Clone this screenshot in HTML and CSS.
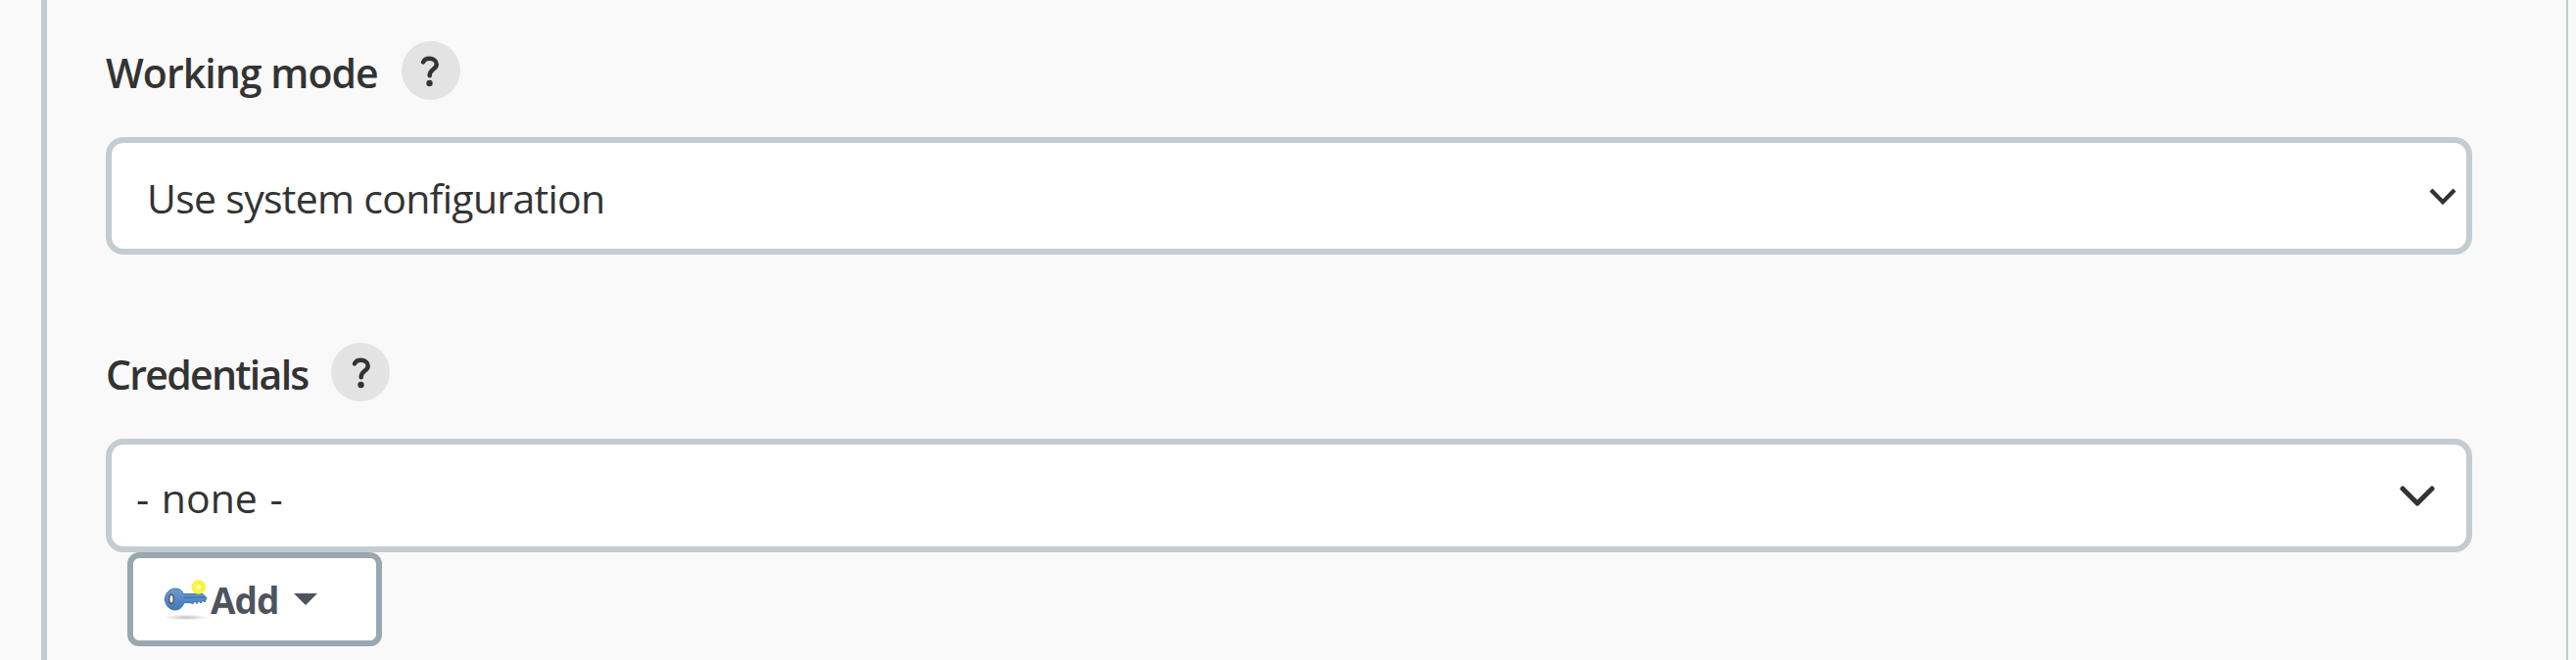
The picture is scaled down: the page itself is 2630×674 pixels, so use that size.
FILE: index.html
```
<!DOCTYPE html>
<html lang="en">
<head>
    <meta charset="UTF-8">
    <title>Configuration</title>
    <link rel="stylesheet" href="styles.css">
</head>
<body>
    <div class="section">
        <div class="form-group">
            <div class="form-label">
                <span class="label-text label-mode">Working mode</span>
                <a class="help-button" title="Help for feature: Working mode">
                    <svg viewBox="0 0 60 60"><path d="M22 21.5C23 19 25.5 17.8 28.3 17.8C32.5 17.8 35.7 20.3 35.7 23.7C35.7 29 28.7 28.3 28.7 35.3"/><circle cx="28.5" cy="43" r="3.2"/></svg>
                </a>
            </div>
            <div class="select select-mode" role="combobox" tabindex="0">
                <span class="select-value">Use system configuration</span>
                <svg class="chevron" viewBox="0 0 28 18"><path d="M2 2L14 14.3L26 2"/></svg>
            </div>
        </div>
        <div class="form-group">
            <div class="form-label">
                <span class="label-text label-credentials">Credentials</span>
                <a class="help-button" title="Help for feature: Credentials">
                    <svg viewBox="0 0 60 60"><path d="M24 21.5C25 19 27.5 17.8 30.3 17.8C34.5 17.8 37.7 20.3 37.7 23.7C37.7 29 30.7 28.3 30.7 35.3"/><circle cx="30.5" cy="43" r="3.2"/></svg>
                </a>
            </div>
            <div class="select select-credentials" role="combobox" tabindex="0">
                <span class="select-value">- none -</span>
                <svg class="chevron" viewBox="0 0 36 22"><path d="M3 3L18 18L33 3"/></svg>
            </div>
            <button class="add-button" type="button">
                <svg class="key-icon" viewBox="0 0 48 48">
                    <defs>
                        <linearGradient id="key-fill" x1="0" y1="0" x2="0" y2="1">
                            <stop offset="0" stop-color="#6b9bd3"/>
                            <stop offset="1" stop-color="#4377b8"/>
                        </linearGradient>
                        <radialGradient id="key-shadow">
                            <stop offset="0" stop-color="#888" stop-opacity=".5"/>
                            <stop offset="1" stop-color="#888" stop-opacity="0"/>
                        </radialGradient>
                    </defs>
                    <ellipse cx="24" cy="42.5" rx="23" ry="3" fill="url(#key-shadow)"/>
                    <path d="M13 13C17 13 20 15 21.500 18.500H41L45 22.500L43 27L41 25L39 28L37 25.500L35 28.500L33 26L31 28.500L28 27.500H22C20.500 32 17 35 13 35C7 35 2.500 30 2.500 24C2.500 18 7 13 13 13Z" fill="url(#key-fill)" stroke="#4674b2" stroke-width="1"/>
                    <path d="M21 22H43" stroke="#3967a5" stroke-width="1"/>
                    <ellipse cx="9" cy="23.800" rx="2.300" ry="4.500" fill="#f4f4ef" stroke="#535c60" stroke-width="1.500"/>
                    <circle cx="36.800" cy="11.500" r="4.800" fill="#fffde0" stroke="#fff33c" stroke-width="5"/>
                </svg>
                <span class="add-text">Add</span>
                <svg class="caret" viewBox="0 0 24 12"><path d="M0 0H24L12 12Z"/></svg>
            </button>
        </div>
    </div>
</body>
</html>
```
FILE: styles.css
```
:root {
    --background: #f9f9f9;
    --border-color: #c3ccd1;
    --button-border: #9aa7af;
    --text-color: #333333;
    --button-text: #4d545d;
}

* {
    box-sizing: border-box;
}

body {
    margin: 0;
    background: var(--background);
    color: var(--text-color);
    font-family: "Open Sans", "Noto Sans", sans-serif;
    font-size: 41px;
}

.section {
    width: 2580px;
    height: 674px;
    margin-left: 42px;
    padding: 42px 96px 0 60px;
    border-left: 6px solid var(--border-color);
    border-right: 2px solid var(--border-color);
    overflow: hidden;
}

.form-group {
    margin-bottom: 90px;
}

.form-label {
    display: flex;
    align-items: center;
    height: 60px;
    margin-bottom: 38px;
}

.label-text {
    padding-top: 3px;
    font-weight: 600;
    line-height: 60px;
    white-space: nowrap;
}

.label-mode {
    width: 302px;
    letter-spacing: -0.95px;
}

.label-credentials {
    width: 230px;
    letter-spacing: -1.7px;
}

.help-button {
    width: 60px;
    height: 60px;
    border-radius: 50%;
    background: #e3e3e3;
}

.help-button svg {
    display: block;
}

.help-button path {
    fill: none;
    stroke: var(--text-color);
    stroke-width: 4.5;
    stroke-linecap: round;
}

.help-button circle {
    fill: var(--text-color);
}

.select {
    display: flex;
    align-items: center;
    justify-content: space-between;
    background: #ffffff;
    border: 6px solid var(--border-color);
    border-radius: 18px;
}

.select-value {
    line-height: 60px;
    white-space: nowrap;
}

.select-mode {
    height: 120px;
    padding: 3px 10px 0 36px;
    letter-spacing: -0.7px;
}

.select-credentials {
    height: 116px;
    padding: 3px 32px 0 25px;
    word-spacing: 2px;
}

.chevron {
    margin-top: -2px;
    fill: none;
    stroke: var(--text-color);
}

.select-mode .chevron {
    width: 28px;
    height: 18px;
    stroke-width: 4.2;
}

.select-credentials .chevron {
    width: 36px;
    height: 22px;
    stroke-width: 5;
    stroke-linecap: round;
    stroke-linejoin: round;
}

.add-button {
    display: flex;
    align-items: center;
    width: 260px;
    height: 96px;
    margin-left: 22px;
    padding: 0 0 0 30px;
    background: #ffffff;
    border: 6px solid var(--button-border);
    border-radius: 12px;
    color: var(--button-text);
    font-family: inherit;
    font-size: 37px;
    font-weight: 700;
}

.key-icon {
    width: 48px;
    height: 48px;
}

.add-text {
    width: 86px;
    padding-left: 1px;
    text-align: left;
    letter-spacing: -1px;
}

.caret {
    width: 24px;
    height: 12px;
    fill: var(--button-text);
}
```
